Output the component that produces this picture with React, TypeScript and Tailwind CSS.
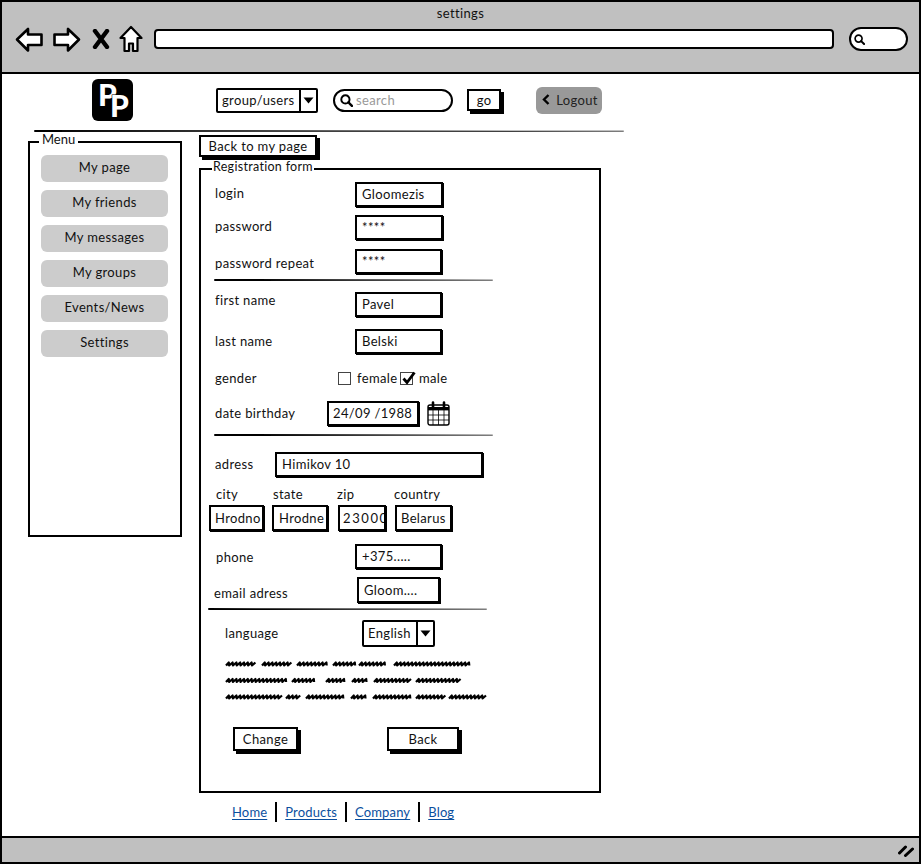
import React from 'react';

const LINES: [number, number][][] = [
  [[1, 31], [37, 67], [72, 104], [108, 131], [134, 162], [169, 246]],
  [[1, 63], [67, 91], [101, 122], [127, 144], [149, 187], [191, 236]],
  [[1, 57], [61, 76], [81, 121], [126, 142], [148, 187], [191, 221], [224, 262]],
];

// slanted zigzag stroke for one greeked word
const scribble = (x0: number, x1: number, y: number) => {
  let d = `M${x0} ${y + 1.5}`;
  let up = true;
  for (let x = x0 + 2; x < x1; x += 1.9) {
    d += ` L${(x + (up ? 0.8 : -0.8)).toFixed(1)} ${up ? y - 1.5 : y + 1.5}`;
    up = !up;
  }
  return d;
};

const Sketchbox = ({ className, children }: { className: string; children?: React.ReactNode }) => (
  <div className={`border-2 border-black bg-white flex items-center overflow-hidden whitespace-nowrap shrink-0 ${className}`}>
    {children}
  </div>
);

const Field = ({ className, value }: { className: string; value: string }) => (
  <Sketchbox className={`shadow-[1px_1px_0_#000] ${className.includes('pl-') ? '' : 'pl-[5px]'} ${className}`}>
    <span className="pb-[1px]">{value}</span>
  </Sketchbox>
);

const Button = ({ className, label }: { className: string; label: string }) => (
  <button className={`border-2 border-black bg-white flex items-center justify-center shadow-[3px_3px_0_#000] shrink-0 ${className}`}>
    {label}
  </button>
);

const Rule = ({ className }: { className: string }) => (
  <div className={`h-[2px] bg-black rounded-full [clip-path:polygon(0_0,100%_40%,100%_80%,0_100%)] ${className}`} />
);

const Caret = () => (
  <div className="w-[17px] h-full border-l-2 border-black flex items-center justify-center">
    <svg width="11" height="7" viewBox="0 0 11 7"><path d="M0.5 0.5H10.5L5.5 6.5Z" fill="#000" /></svg>
  </div>
);

const Magnifier = ({ size = 12 }: { size?: number }) => (
  <svg width={size} height={size} viewBox="0 0 12 12" fill="none" stroke="#000" strokeWidth="1.8" className="shrink-0">
    <circle cx="5" cy="5" r="3.8" />
    <path d="M7.8 7.8L11 11" strokeWidth="2.2" strokeLinecap="round" />
  </svg>
);

const ArrowIcon = ({ flip }: { flip?: boolean }) => (
  <svg width="28" height="25" viewBox="0 0 28 25" className={flip ? 'scale-x-[-1]' : ''}>
    <path d="M2 12.5L13 2V7.5H26.5V18H13V23.5Z" fill="#fff" stroke="#000" strokeWidth="2.6" strokeLinejoin="round" />
  </svg>
);

const Row = ({ label, className, children, labelClass = '' }: { label: string; className: string; children: React.ReactNode; labelClass?: string }) => (
  <div className={`flex items-center ${className}`}>
    <span className={`shrink-0 ${labelClass}`}>{label}</span>
    {children}
  </div>
);

const menu = ['My page', 'My friends', 'My messages', 'My groups', 'Events/News', 'Settings'];
const links = ['Home', 'Products', 'Company', 'Blog'];

export default function App() {
  return (
    <div className="w-[921px] h-[864px] border-2 border-black bg-white flex flex-col overflow-hidden text-[13px] leading-[14px] tracking-[0.35px] text-[#111] [font-family:Lato,'Liberation_Sans',sans-serif]">
      {/* browser chrome */}
      <div className="h-[72px] shrink-0 bg-[#c0c0c0] border-b-2 border-black">
        <div className="text-center mt-[4px]">settings</div>
        <div className="flex items-center mt-[5px]">
          <div className="ml-[13px]"><ArrowIcon /></div>
          <div className="ml-[10px]"><ArrowIcon flip /></div>
          <svg width="18" height="20" viewBox="0 0 18 20" className="ml-[11px]">
            <path d="M3 2L15 18M15 2L3 18" stroke="#000" strokeWidth="4.4" strokeLinecap="round" />
          </svg>
          <svg width="24" height="28" viewBox="0 0 24 28" className="ml-[9px]">
            <path d="M12 2L22.5 13H18.5V26H14V18.5H10V26H5.5V13H1.5Z" fill="#fff" stroke="#000" strokeWidth="2.2" strokeLinejoin="round" />
          </svg>
          <div className="ml-[11px] w-[680px] h-[20px] bg-white border-2 border-black rounded-[4px]" />
          <div className="ml-[15px] w-[59px] h-[24px] bg-white border-2 border-black rounded-full flex items-center pl-[3px]">
            <Magnifier size={11} />
          </div>
        </div>
      </div>

      <div className="flex-1 min-h-0">
        {/* header */}
        <div className="flex items-center pt-[5px] ml-[90px]">
          <svg width="41" height="42" viewBox="0 0 41 42" className="shrink-0">
            <rect width="41" height="42" rx="6" fill="#000" />
            <text fontSize="30" fontWeight="900" fill="#fff" stroke="#000" strokeWidth="1.2" paintOrder="stroke" fontFamily="Lato, sans-serif">
              <tspan x="6" y="27">P</tspan>
              <tspan x="18" y="38">P</tspan>
            </text>
          </svg>
          <Sketchbox className="ml-[83px] w-[102px] h-[25px] pl-[4px] justify-between rounded-[2px]">
            <span className="pb-[1px]">group/users</span>
            <Caret />
          </Sketchbox>
          <div className="ml-[15px] w-[120px] h-[23px] border-2 border-black rounded-full bg-white flex items-center pl-[5px] gap-[3px] text-[#999]">
            <Magnifier size={13} />
            <span className="pb-[1px]">search</span>
          </div>
          <Button className="ml-[14px] w-[34px] h-[22px]" label="go" />
          <button className="ml-[35px] w-[66px] h-[27px] bg-[#999] rounded-[6px] flex items-center justify-center gap-[6px] pl-[2px] pb-[1px] text-[#222]">
            <svg width="8" height="11" viewBox="0 0 8 11"><path d="M6.5 1L2 5.5L6.5 10" fill="none" stroke="#000" strokeWidth="2.4" /></svg>
            Logout
          </button>
        </div>
        <Rule className="ml-[32px] w-[590px] mt-[9px]" />

        <div className="flex">
          {/* menu */}
          <fieldset className="ml-[26px] w-[154px] h-[405px] border-2 border-black shrink-0">
            <legend className="ml-[9px] px-[3px] pb-[6px] tracking-normal">Menu</legend>
            <div className="flex flex-col gap-[8px] mt-[3px] ml-[11px] mr-[12px]">
              {menu.map((item) => (
                <button key={item} className="h-[27px] pb-[3px] bg-[#ccc] rounded-[6px] flex items-center justify-center">{item}</button>
              ))}
            </div>
          </fieldset>

          <div className="ml-[17px] w-[402px] shrink-0">
            <Button className="mt-[3px] w-[118px] h-[22px]" label="Back to my page" />
            {/* form */}
            <fieldset className="mt-[3px] h-[633px] border-2 border-black">
              <legend className="ml-[11px] px-[1px] pb-[4px] text-[12.5px] tracking-[0.3px]">Registration form</legend>
              <Row label="login" className="mt-[4px] ml-[14px]" labelClass="w-[140px] pb-[3px]">
                <Field className="w-[88px] h-[25px]" value="Gloomezis" />
              </Row>
              <Row label="password" className="mt-[8px] ml-[14px]" labelClass="w-[140px] pb-[3px]">
                <Field className="w-[88px] h-[25px]" value="****" />
              </Row>
              <Row label="password repeat" className="mt-[9px] ml-[14px]" labelClass="w-[140px] pt-[2px]">
                <Field className="w-[87px] h-[25px]" value="****" />
              </Row>
              <Rule className="ml-[13px] w-[279px] mt-[5px]" />
              <Row label="first name" className="mt-[11px] ml-[14px]" labelClass="w-[140px] pb-[10px]">
                <Field className="w-[87px] h-[25px]" value="Pavel" />
              </Row>
              <Row label="last name" className="mt-[12px] ml-[14px]" labelClass="w-[140px] pb-[2px]">
                <Field className="w-[87px] h-[25px]" value="Belski" />
              </Row>
              <Row label="gender" className="mt-[17px] ml-[14px] h-[14px]" labelClass="w-[123px]">
                <div className="w-[13px] h-[13px] border border-[#444] bg-white shrink-0" />
                <span className="ml-[6px] w-[43px]">female</span>
                <div className="relative w-[13px] h-[13px] border border-[#444] bg-white shrink-0">
                  <svg width="15" height="16" viewBox="0 0 15 16" className="absolute left-0 -top-[3px]">
                    <path d="M2.5 8.5L6 12.5L13.5 2.5" fill="none" stroke="#000" strokeWidth="2.8" />
                  </svg>
                </div>
                <span className="ml-[6px]">male</span>
              </Row>
              <Row label="date birthday" className="mt-[16px] ml-[14px]" labelClass="w-[112px] pb-[2px]">
                <Field className="w-[92px] h-[25px] pl-[4px]" value="24/09 /1988" />
                <svg width="23" height="25" viewBox="0 0 23 25" className="ml-[8px] shrink-0" fill="none" stroke="#000">
                  <rect x="1" y="4" width="21" height="20" rx="2" fill="#fff" strokeWidth="1.4" />
                  <path d="M1 9H22M1 14H22M1 19H22M6 9V24M11.5 9V24M17 9V24" strokeWidth="0.8" />
                  <path d="M1 7.5H22" strokeWidth="3" />
                  <path d="M6 1.5V6M17 1.5V6" strokeWidth="2.6" strokeLinecap="round" />
                </svg>
              </Row>
              <Rule className="ml-[13px] w-[279px] mt-[8px]" />
              <Row label="adress" className="mt-[16px] ml-[14px]" labelClass="w-[60px] pb-[2px]">
                <Field className="w-[208px] h-[25px]" value="Himikov 10" />
              </Row>
              <div className="flex mt-[10px] ml-[15px]">
                <span className="w-[57px]">city</span>
                <span className="w-[64px]">state</span>
                <span className="w-[57px]">zip</span>
                <span>country</span>
              </div>
              <div className="flex mt-[4px] ml-[8px]">
                <Field className="w-[55px] h-[26px] pl-[4px]" value="Hrodno" />
                <Field className="ml-[8px] w-[56px] h-[26px]" value="Hrodne" />
                <Field className="ml-[10px] w-[48px] h-[26px] pl-[3px] tracking-[1.6px]" value="23000" />
                <Field className="ml-[9px] w-[57px] h-[26px] pl-[4px]" value="Belarus" />
              </div>
              <Row label="phone" className="mt-[13px] ml-[15px]" labelClass="w-[139px]">
                <Field className="w-[87px] h-[25px]" value="+375....." />
              </Row>
              <Row label="email adress" className="mt-[8px] ml-[13px]" labelClass="w-[143px] pt-[6px]">
                <Field className="w-[83px] h-[26px]" value="Gloom...." />
              </Row>
              <Rule className="ml-[7px] w-[279px] mt-[5px]" />
              <Row label="language" className="mt-[10px] ml-[24px]" labelClass="w-[137px] pb-[1px]">
                <Sketchbox className="w-[73px] h-[27px] pl-[4px] justify-between rounded-[2px]">
                  <span className="pb-[1px]">English</span>
                  <Caret />
                </Sketchbox>
              </Row>
              {/* greeked paragraph */}
              <svg width="264" height="48" viewBox="0 0 264 48" className="ml-[24px] mt-[10px] block" fill="none" stroke="#000" strokeWidth="2.2" strokeLinejoin="round">
                {LINES.map((words, i) => words.map(([a, b]) => (
                  <path key={`${i}-${a}`} d={scribble(a, b, 7 + i * 16.5)} />
                )))}
              </svg>
              <div className="flex mt-[22px]">
                <Button className="ml-[32px] w-[65px] h-[24px]" label="Change" />
                <Button className="ml-[89px] w-[72px] h-[24px]" label="Back" />
              </div>
            </fieldset>
            {/* footer links */}
            <div className="flex items-center mt-[9px] ml-[33px] h-[20px] text-[#0b4f9e] tracking-[0.15px]">
              {links.map((link, i) => (
                <React.Fragment key={link}>
                  {i > 0 && <span className="w-[2px] h-[20px] bg-black mx-[8px]" />}
                  <a href="#" className="underline underline-offset-2">{link}</a>
                </React.Fragment>
              ))}
            </div>
          </div>
        </div>
      </div>

      {/* status bar */}
      <div className="h-[26px] shrink-0 bg-[#c0c0c0] border-t-2 border-black flex items-center justify-end pr-[5px]">
        <svg width="16" height="13" viewBox="0 0 16 13" fill="none" stroke="#000" strokeWidth="3" strokeLinecap="round">
          <path d="M1.5 9L7.5 3M7.5 11.5L14.5 5" />
        </svg>
      </div>
    </div>
  );
}
